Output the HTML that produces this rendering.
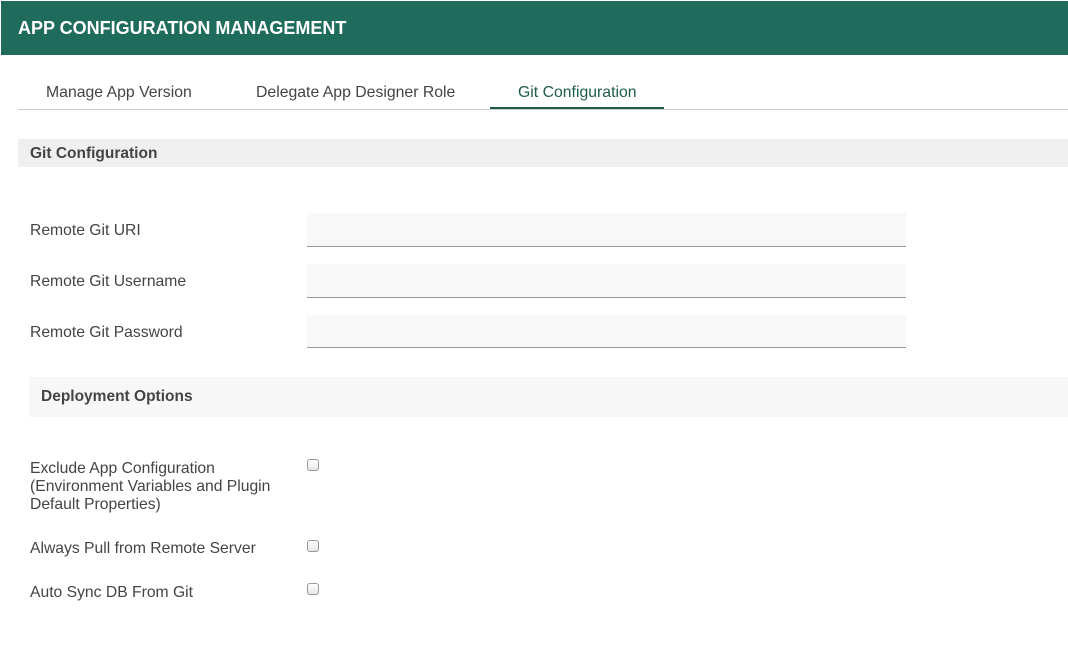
<!DOCTYPE html>
<html><head><style>
*{margin:0;padding:0;box-sizing:border-box}
body{width:1068px;height:650px;background:#fff;font-family:"Liberation Sans",Arial,sans-serif;position:relative;overflow:hidden;color:#444}
.a{position:absolute}
.hdr{left:1px;top:1px;width:1067px;height:54px;background:#1f6b5c}
.hdr span{position:absolute;left:17px;top:17px;color:#fff;font-weight:bold;font-size:18px;letter-spacing:0}
.tab{top:84px;font-size:15.8px;color:#444}
.lbl{left:30px;font-size:15.7px;color:#444;line-height:18px}
.inp{left:307px;width:599px;background:#f8f8f8;border-bottom:1px solid #999}
.cb{left:307px;width:12px;height:12px;border:1px solid #999;border-radius:3px;background:linear-gradient(#fff,#e6e6e6)}
</style></head><body>
<div class="a hdr"><span>APP CONFIGURATION MANAGEMENT</span></div>
<div class="a tab" style="left:46px">Manage App Version</div>
<div class="a tab" style="left:256px">Delegate App Designer Role</div>
<div class="a tab" style="left:518px;color:#1f5c4a">Git Configuration</div>
<div class="a" style="left:18px;top:109px;width:1050px;height:1px;background:#ccc"></div>
<div class="a" style="left:490px;top:107px;width:174px;height:2px;background:#1f5c4a"></div>
<div class="a" style="left:18px;top:139px;width:1050px;height:28px;background:#efefef"></div>
<div class="a" style="left:30px;top:145px;font-size:15.5px;font-weight:bold;color:#444">Git Configuration</div>
<div class="a lbl" style="top:222px">Remote Git URI</div>
<div class="a inp" style="top:213px;height:34px"></div>
<div class="a lbl" style="top:273px">Remote Git Username</div>
<div class="a inp" style="top:264px;height:34px"></div>
<div class="a lbl" style="top:324px">Remote Git Password</div>
<div class="a inp" style="top:315px;height:33px"></div>
<div class="a" style="left:29px;top:377px;width:1039px;height:40px;background:#f7f7f7"></div>
<div class="a" style="left:41px;top:388px;font-size:15.5px;font-weight:bold;color:#444">Deployment Options</div>
<div class="a lbl" style="top:460px">Exclude App Configuration<br>(Environment Variables and Plugin<br>Default Properties)</div>
<div class="a cb" style="top:459px"></div>
<div class="a lbl" style="top:540px">Always Pull from Remote Server</div>
<div class="a cb" style="top:540px"></div>
<div class="a lbl" style="top:584px">Auto Sync DB From Git</div>
<div class="a cb" style="top:583px"></div>
</body></html>
